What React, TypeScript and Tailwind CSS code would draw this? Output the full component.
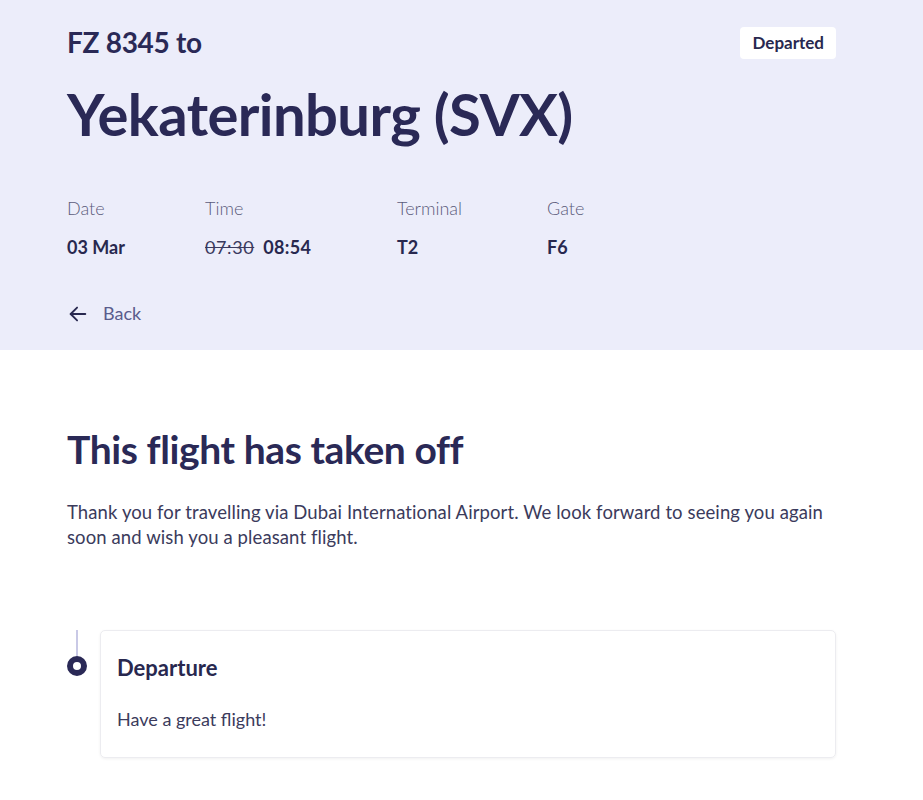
import React from 'react';

const font = { fontFamily: 'Lato, "Noto Sans", sans-serif' };

const Info: React.FC<{ label: string; width: string; children: React.ReactNode }> = ({ label, width, children }) => (
  <div className={width}>
    <p className="text-[18px] leading-[24px] font-light text-[#5b5b7b]">{label}</p>
    <p className="mt-[15px] text-[18px] leading-[24px] font-bold text-[#28284f]">{children}</p>
  </div>
);

const App: React.FC = () => {
  return (
    <div className="min-h-[800px] bg-white text-[#2a2956]" style={font}>
      <div className="bg-[#ecedfa] h-[350px] px-[67px] pt-[26px]">
        <div className="w-[769px] flex items-start justify-between">
          <h2 className="text-[28px] leading-[32px] font-bold tracking-[-0.3px]">FZ 8345 to</h2>
          <span className="mt-[1px] bg-white rounded-[4px] px-[12px] h-[32px] flex items-center text-[17px] font-bold text-[#28284f]">
            Departed
          </span>
        </div>
        <h1 className="mt-[17px] text-[58px] leading-[76px] font-bold tracking-[-0.6px]">Yekaterinburg (SVX)</h1>

        <div className="mt-[44px] flex">
          <Info label="Date" width="w-[138px]">03 Mar</Info>
          <Info label="Time" width="w-[192px]">
            <span className="line-through font-normal tracking-[0.6px] text-[#3a3a5e]">07:30</span>
            <span className="ml-[9px] tracking-[0.3px]">08:54</span>
          </Info>
          <Info label="Terminal" width="w-[150px]">T2</Info>
          <Info label="Gate" width="w-[100px]">F6</Info>
        </div>

        <button className="mt-[41px] flex items-center gap-[14px] text-[18px] text-[#5a5c8c]">
          <svg width="22" height="22" viewBox="0 0 24 24" fill="none" stroke="#28284f" strokeWidth="2" strokeLinecap="round" strokeLinejoin="round">
            <path d="M20 12H4" />
            <path d="M11 5l-7 7 7 7" />
          </svg>
          Back
        </button>
      </div>

      <div className="px-[67px] pt-[75px]">
        <h2 className="text-[39px] leading-[48px] font-bold tracking-[-0.4px]">This flight has taken off</h2>
        <p className="mt-[27px] w-[769px] text-[18.5px] leading-[25px] tracking-[0.1px] text-[#3b3b5c]">
          Thank you for travelling via Dubai International Airport. We look forward to seeing you again soon and wish you a pleasant flight.
        </p>

        <div className="mt-[80px] flex w-[769px]">
          <div className="w-[33px] flex flex-col items-start">
            <div className="ml-[9px] w-[2px] h-[26px] bg-[#c9c9e6]" />
            <div className="w-[20px] h-[20px] rounded-full border-[6px] border-[#2a2956] bg-white" />
          </div>
          <div className="flex-1 rounded-[5px] border border-[#ececf0] shadow-[0_1px_3px_rgba(0,0,0,0.06)] px-[16px] pt-[23px] pb-[26px]">
            <h3 className="text-[22px] leading-[28px] font-bold text-[#28284f]">Departure</h3>
            <p className="mt-[25px] text-[18px] leading-[24px] text-[#3b3b5c]">Have a great flight!</p>
          </div>
        </div>
      </div>
    </div>
  );
};

export default App;
